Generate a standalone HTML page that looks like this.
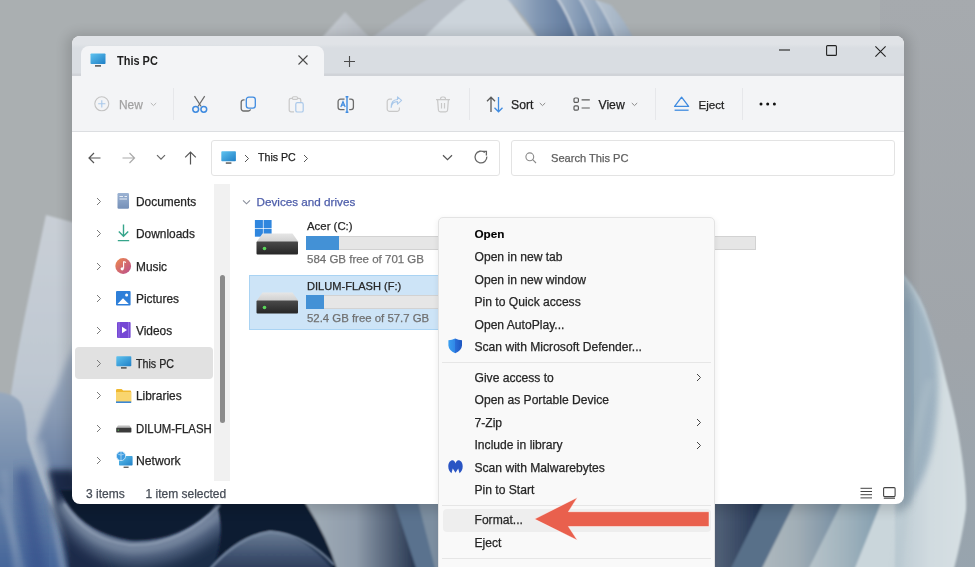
<!DOCTYPE html>
<html><head><meta charset="utf-8">
<style>
*{margin:0;padding:0;box-sizing:border-box}
html,body{width:975px;height:567px;overflow:hidden}
body{position:relative;font-family:"Liberation Sans",sans-serif;background:#a9adb1;color:#262626}
#bg{position:absolute;left:0;top:0}
#win{position:absolute;left:72px;top:36px;width:832px;height:468px;border-radius:8px;overflow:hidden;background:#fff}
.a{position:absolute}
.t{position:absolute;white-space:nowrap;font-size:12px;line-height:12px;-webkit-text-stroke:0.25px currentColor}
svg.i{position:absolute;overflow:visible}
#tabbar{left:0;top:0;width:832px;height:40px;background:linear-gradient(#e0e3e7 0,#e0e3e7 8px,#d9dde2 12px,#d9dde2 37px,#d0d3d8 38px,#d0d3d8 40px)}
#tab{left:9px;top:10px;width:243px;height:32px;background:#f3f4f6;border-radius:8px 8px 0 0}
#toolbar{left:0;top:40px;width:832px;height:56px;background:#f3f4f6;border-bottom:1px solid #dcdee1}
.sep{position:absolute;width:1px;background:#e6e7ea}
.box{position:absolute;border:1px solid #e3e3e3;background:#fff;border-radius:3px}
#menu{position:absolute;left:437.5px;top:217px;width:277.5px;height:360px;background:#f9f9f9;border:1px solid #e3e3e3;border-radius:5px;box-shadow:0 2px 6px rgba(0,0,0,.08)}
.mi{position:absolute;left:36px;white-space:nowrap;font-size:12.1px;line-height:12px;-webkit-text-stroke:0.25px currentColor}
.msep{position:absolute;left:3px;width:269px;height:1px;background:#e6e6e6}
</style></head><body>
<svg id="bg" width="975" height="567" viewBox="0 0 975 567">
  <defs>
    <filter id="b1" x="-10%" y="-10%" width="120%" height="120%"><feGaussianBlur stdDeviation="1.2"/></filter>
    <filter id="b3" x="-30%" y="-30%" width="160%" height="160%"><feGaussianBlur stdDeviation="3"/></filter>
    <filter id="b6" x="-50%" y="-50%" width="200%" height="200%"><feGaussianBlur stdDeviation="6"/></filter>
    <linearGradient id="petalL" x1="0" y1="214" x2="0" y2="567" gradientUnits="userSpaceOnUse">
      <stop offset="0" stop-color="#c9cfd6"/><stop offset="0.45" stop-color="#bfc8d2"/><stop offset="1" stop-color="#9aabc0"/>
    </linearGradient>
    <linearGradient id="lblue" x1="0" y1="392" x2="0" y2="567" gradientUnits="userSpaceOnUse">
      <stop offset="0" stop-color="#98a9be"/><stop offset="0.5" stop-color="#7089ab"/><stop offset="1" stop-color="#46669a"/>
    </linearGradient>
    <linearGradient id="petalR" x1="0" y1="0" x2="1" y2="0">
      <stop offset="0" stop-color="#bccbd3"/><stop offset="0.5" stop-color="#d1dbe0"/><stop offset="1" stop-color="#d6e0e3"/>
    </linearGradient>
    <linearGradient id="greyR" x1="0" y1="0" x2="0" y2="1">
      <stop offset="0" stop-color="#a6aaae"/><stop offset="0.6" stop-color="#a0a5aa"/><stop offset="1" stop-color="#97a4ae"/>
    </linearGradient>
    <linearGradient id="below" x1="0" y1="498" x2="0" y2="567" gradientUnits="userSpaceOnUse">
      <stop offset="0" stop-color="#8593a8"/><stop offset="0.55" stop-color="#6b7c96"/><stop offset="1" stop-color="#3a4c6c"/>
    </linearGradient>
    <linearGradient id="dome" x1="0" y1="0" x2="0" y2="1">
      <stop offset="0" stop-color="#6c7e96"/><stop offset="0.5" stop-color="#3e506e"/><stop offset="1" stop-color="#1e2d4a"/>
    </linearGradient>
    <linearGradient id="lgband" x1="0" y1="0" x2="1" y2="0">
      <stop offset="0" stop-color="#a4b0b9"/><stop offset="0.45" stop-color="#8e9baa"/><stop offset="1" stop-color="#1a2a46"/>
    </linearGradient>
    <linearGradient id="navyL" x1="0" y1="0" x2="1" y2="0">
      <stop offset="0" stop-color="#56657a"/><stop offset="1" stop-color="#1d3050"/>
    </linearGradient>
    <linearGradient id="st2" x1="0" y1="0" x2="1" y2="0">
      <stop offset="0" stop-color="#b0bac0"/><stop offset="0.45" stop-color="#a1aeb6"/><stop offset="1" stop-color="#718aa0"/>
    </linearGradient>
    <linearGradient id="st3" x1="0" y1="0" x2="1" y2="0">
      <stop offset="0" stop-color="#bac6cc"/><stop offset="0.5" stop-color="#a2b4be"/><stop offset="1" stop-color="#819cae"/>
    </linearGradient>
    <linearGradient id="leftdark" x1="0" y1="0" x2="1" y2="0">
      <stop offset="0" stop-color="#0f1a33"/><stop offset="1" stop-color="#16223c"/>
    </linearGradient>
  </defs>
  <rect width="975" height="567" fill="#aaafb1"/>
  <rect x="880" y="-5" width="100" height="580" fill="url(#greyR)"/>
  <!-- top petals -->
  <defs>
    <linearGradient id="tp1" x1="0" y1="0" x2="1" y2="0"><stop offset="0" stop-color="#b3c0ce"/><stop offset="0.45" stop-color="#8197b3"/><stop offset="1" stop-color="#5a7499"/></linearGradient>
    <linearGradient id="tp2" x1="0" y1="0" x2="1" y2="0"><stop offset="0" stop-color="#a5b5c7"/><stop offset="1" stop-color="#6883a6"/></linearGradient>
    <linearGradient id="tp3" x1="0" y1="0" x2="1" y2="0"><stop offset="0" stop-color="#aebccc"/><stop offset="1" stop-color="#7a92af"/></linearGradient>
    <linearGradient id="tp4" x1="0" y1="0" x2="1" y2="0"><stop offset="0" stop-color="#b8c4d0"/><stop offset="1" stop-color="#9aabbf"/></linearGradient>
    <linearGradient id="tri" x1="0" y1="0" x2="1" y2="0"><stop offset="0" stop-color="#c7ccd2"/><stop offset="1" stop-color="#b4bac1"/></linearGradient>
  </defs>
  <g filter="url(#b1)">
    <path d="M318 42L345 12L374 42Z" fill="url(#tri)"/>
    <path d="M366 42Q395 20 432 -4H472L440 42Z" fill="#b5bcc4"/>
    <path d="M420 42Q445 15 470 -4H506Q522 20 540 42Z" fill="#ccd4db"/>
    <path d="M504 -4Q528 18 540 42H578Q568 15 556 -4Z" fill="url(#tp1)"/>
    <path d="M556 -4Q570 15 578 42H599Q589 15 578 -4Z" fill="url(#tp2)"/>
    <path d="M578 -4Q591 15 599 42H618Q607 16 596 0Z" fill="url(#tp3)"/>
    <path d="M596 0Q609 18 618 42H635Q625 20 611 5Z" fill="url(#tp4)"/>
    <path d="M556 -4Q569 15 578 42" stroke="#d3dbe4" stroke-width="1.6" fill="none"/>
    <path d="M578 -4Q590 15 599 42" stroke="#cdd6e0" stroke-width="1.4" fill="none"/>
    <path d="M596 0Q607 16 618 42" stroke="#c9d3dd" stroke-width="1.2" fill="none"/>
  </g>
  <!-- left strip -->
  <defs>
    <linearGradient id="rblue" x1="0" y1="318" x2="0" y2="567" gradientUnits="userSpaceOnUse">
      <stop offset="0" stop-color="#aab7c7"/><stop offset="0.4" stop-color="#8799b3"/><stop offset="0.75" stop-color="#56709a"/><stop offset="1" stop-color="#2f4468"/>
    </linearGradient>
  </defs>
  <g filter="url(#b1)">
    <path d="M46 215L90 227V580H0V470Q5 430 10 400Q16 360 22 330Q32 280 46 215Z" fill="url(#petalL)"/>

    <path d="M95 350Q72 385 58 425Q60 460 72 490" stroke="#9fb0c4" stroke-width="2" fill="none" opacity=".55"/>
  </g>
  <path d="M95 318Q70 345 58 385Q42 418 37 440Q45 468 56 489Q66 512 76 534L88 580H95Z" fill="url(#rblue)" filter="url(#b3)"/>
  <path d="M-5 392Q16 393 22 405Q27 422 27 440Q36 468 44 489Q55 515 64 534Q72 552 76 580H-5Z" fill="url(#lblue)" filter="url(#b1)"/>
  
  
  <path d="M0 495Q12 530 25 580" stroke="#a9b8c9" stroke-width="3" fill="none" opacity=".6" filter="url(#b3)"/>
  <!-- bottom strip left of menu -->
  <g filter="url(#b1)">
    <path d="M73 498Q70 540 70 580H440V498Z" fill="#1f2d4a"/>
  </g>
  <path d="M22 470Q30 520 40 580" stroke="#36508a" stroke-width="14" fill="none" opacity=".8" filter="url(#b6)"/>
  <path d="M40 440Q52 500 66 580" stroke="#a2b1c4" stroke-width="5" fill="none" opacity=".85" filter="url(#b3)"/>
  <path d="M4 470Q10 520 18 580" stroke="#8fa3be" stroke-width="4" fill="none" opacity=".7" filter="url(#b3)"/>
  <!-- navy diagonal band between streak and rim -->
  <path d="M48 470L74 470L88 520L116 580H70Q62 530 48 470Z" fill="#1d2b4a" filter="url(#b3)"/>
  <!-- rim band (wide, soft) -->
  <path d="M62 500Q88 548 130 552Q180 555 226 512" stroke="#4d5e7c" stroke-width="26" fill="none" filter="url(#b6)"/>
  <path d="M64 502Q88 544 130 548Q180 550 224 508" stroke="#75859e" stroke-width="12" fill="none" filter="url(#b3)"/>
  <g filter="url(#b1)">
    <!-- dark hole -->
    <path d="M60 490Q78 532 130 540Q175 543 210 512Q216 505 224 490Z" fill="#0f1a33"/>
    <!-- second dark -->
    <path d="M215 498H400L425 580H340Q315 533 270 531Q232 536 212 570Q228 535 215 498Z" fill="#0f1a31"/>
    <!-- dome -->
    <path d="M198 582Q232 536 270 531Q308 533 342 582Z" fill="url(#dome)"/>
    <!-- light diagonal band -->
    <path d="M302 498H397L423 580H340Q330 540 302 498Z" fill="url(#lgband)"/>
    <path d="M393 498H419L440 580H420Z" fill="#5a728e"/>
    <path d="M417 498H442V580H438Z" fill="#7b8ea0"/>
  </g>
  <path d="M64 504Q86 540 130 545Q180 547 220 505" stroke="#8d9cb2" stroke-width="2" fill="none" filter="url(#b1)"/>
  <path d="M205 575Q236 537 270 532Q306 534 334 565" stroke="#7a8ca4" stroke-width="2" fill="none" filter="url(#b1)"/>
  <!-- bottom strip right of menu -->
  <g filter="url(#b1)">
    <rect x="712" y="498" width="200" height="80" fill="#cad6db"/>
    <path d="M712 498H768L728 578H712Z" fill="url(#navyL)"/>
    <path d="M766 498H799L759 578H726Z" fill="#587089"/>
    <path d="M797 498H846L806 578H757Z" fill="url(#st2)"/>
    <path d="M844 498H883L851 578H804Z" fill="url(#st3)"/>
  </g>
  <!-- right petal -->
  <g filter="url(#b1)">
    <path d="M895 265Q915 285 925 310Q938 345 946 380Q957 420 961 450Q967 490 966 510Q962 540 951 580H895Z" fill="url(#petalR)"/>
  </g>
  <path d="M898 272Q925 298 936 350Q942 400 932 450Q922 490 898 515Z" fill="#95abbb" opacity=".85" filter="url(#b3)"/>
  <path d="M906 300Q913 340 912 420Q910 470 906 505" stroke="#7f9ab0" stroke-width="6" fill="none" opacity=".5" filter="url(#b3)"/>
  <path d="M930 380Q915 430 908 490Q902 530 898 570" stroke="#b4c4cc" stroke-width="6" fill="none" opacity=".5" filter="url(#b3)"/>
  <!-- window shadow -->
  <rect x="66" y="33" width="844" height="478" rx="12" fill="#000" opacity=".13" filter="url(#b6)"/>
</svg>




















<div id="win">
  <div id="tabbar" class="a"></div>
  <div id="tab" class="a"></div>
  <div id="toolbar" class="a"></div>
</div>

<!-- ===== page-coordinate overlay ===== -->
<div id="ui" class="a" style="left:0;top:0;width:975px;height:567px;filter:blur(0.4px)">
<!-- tab icon -->
<svg class="i" style="left:90px;top:53px" width="17" height="15" viewBox="0 0 17 15">
  <defs><linearGradient id="mon" x1="0" y1="0" x2="1" y2="1"><stop offset="0" stop-color="#5fc3ef"/><stop offset="1" stop-color="#1f7fc6"/></linearGradient></defs>
  <rect x="0.5" y="0.5" width="15" height="10.5" rx="0.8" fill="url(#mon)"/>
  <rect x="5" y="12.2" width="6" height="1.4" fill="#444"/>
</svg>
<div class="t" style="left:117px;top:55px;font-size:12.6px;font-weight:bold;color:#1f1f1f;-webkit-text-stroke:0;transform:scaleX(.87);transform-origin:0 0">This PC</div>
<!-- tab close -->
<svg class="i" style="left:298px;top:55px" width="10" height="10" viewBox="0 0 10 10"><path d="M0.5 0.5L9.5 9.5M9.5 0.5L0.5 9.5" stroke="#4a4a4a" stroke-width="1.1"/></svg>
<!-- plus -->
<svg class="i" style="left:344px;top:56px" width="11" height="11" viewBox="0 0 11 11"><path d="M5.5 0V11M0 5.5H11" stroke="#4a4a4a" stroke-width="1.1"/></svg>
<!-- min max close -->
<svg class="i" style="left:779px;top:49px" width="11" height="2" viewBox="0 0 11 2"><path d="M0 1H11" stroke="#222" stroke-width="1.1"/></svg>
<svg class="i" style="left:826px;top:45px" width="11" height="11" viewBox="0 0 11 11"><rect x="0.6" y="0.6" width="9.8" height="9.8" rx="1" fill="none" stroke="#222" stroke-width="1.1"/></svg>
<svg class="i" style="left:874.8px;top:45.5px" width="11" height="11" viewBox="0 0 11 11"><path d="M0.4 0.4L10.6 10.6M10.6 0.4L0.4 10.6" stroke="#222" stroke-width="1.1"/></svg>

<!-- toolbar -->
<svg class="i" style="left:94px;top:96px" width="16" height="16" viewBox="0 0 16 16"><circle cx="7.8" cy="7.8" r="7" fill="none" stroke="#c4c4c4" stroke-width="1.1"/><path d="M7.8 4.2V11.4M4.2 7.8H11.4" stroke="#a9c8ea" stroke-width="1.1"/></svg>
<div class="t" style="left:119px;top:99px;color:#a2a2a2;font-size:11.9px">New</div>
<svg class="i" style="left:150px;top:102px" width="7" height="5" viewBox="0 0 7 5"><path d="M0.8 1L3.5 3.6L6.2 1" fill="none" stroke="#b5b5b5" stroke-width="1"/></svg>
<div class="sep" style="left:173px;top:88px;height:32px"></div>
<!-- cut -->
<svg class="i" style="left:191px;top:95px" width="17" height="18" viewBox="0 0 17 18">
  <path d="M3.5 1.2L10.2 11.5M13.7 1.2L7 11.5" stroke="#6b6b6b" stroke-width="1.2"/>
  <circle cx="4.7" cy="14.3" r="2.9" fill="none" stroke="#3f8be0" stroke-width="1.5"/>
  <circle cx="12.8" cy="14.3" r="2.9" fill="none" stroke="#3f8be0" stroke-width="1.5"/>
</svg>
<!-- copy -->
<svg class="i" style="left:240px;top:96px" width="17" height="17" viewBox="0 0 17 17">
  <path d="M4.6 3.8H3.6A2.4 2.4 0 0 0 1.2 6.2V12.6A2.4 2.4 0 0 0 3.6 15H8.4A2.4 2.4 0 0 0 10.6 13.4" fill="none" stroke="#6b6b6b" stroke-width="1.3"/>
  <rect x="6.3" y="1.2" width="9" height="11" rx="2.4" fill="none" stroke="#3f8be0" stroke-width="1.3"/>
</svg>
<!-- paste disabled -->
<svg class="i" style="left:288px;top:96px" width="17" height="17" viewBox="0 0 17 17">
  <path d="M4.5 2.3H3A1.8 1.8 0 0 0 1.2 4.1V14A1.8 1.8 0 0 0 3 15.8H6" fill="none" stroke="#c8c8c8" stroke-width="1.2"/>
  <rect x="4.5" y="0.8" width="5" height="2.6" rx="1" fill="none" stroke="#c8c8c8" stroke-width="1.1"/>
  <path d="M10 2.3H11A1.8 1.8 0 0 1 12.8 4.1V6" fill="none" stroke="#c8c8c8" stroke-width="1.2"/>
  <rect x="7.8" y="6.6" width="7.4" height="9.4" rx="1.6" fill="none" stroke="#a9c8ea" stroke-width="1.2"/>
</svg>
<!-- rename -->
<svg class="i" style="left:337px;top:96px" width="18" height="17" viewBox="0 0 18 17">
  <path d="M7.5 3.2H3.5A2.4 2.4 0 0 0 1.1 5.6V11.2A2.4 2.4 0 0 0 3.5 13.6H7.5M12.2 3.2H14A2.4 2.4 0 0 1 16.4 5.6V11.2A2.4 2.4 0 0 1 14 13.6H12.2" fill="none" stroke="#6b6b6b" stroke-width="1.3"/>
  <path d="M3.8 11L6 5.6L8.2 11M4.6 9.2H7.4" fill="none" stroke="#3f8be0" stroke-width="1.2"/>
  <path d="M10 0.8V16.2M8.6 0.8H11.4M8.6 16.2H11.4" fill="none" stroke="#3f8be0" stroke-width="1.4"/>
</svg>
<!-- share disabled -->
<svg class="i" style="left:386px;top:96px" width="17" height="17" viewBox="0 0 17 17">
  <path d="M6 3.2H3.6A2.4 2.4 0 0 0 1.2 5.6V13A2.4 2.4 0 0 0 3.6 15.4H11A2.4 2.4 0 0 0 13.4 13V11.5" fill="none" stroke="#c8c8c8" stroke-width="1.2"/>
  <path d="M5.2 11.5C5.6 7.5 8 5.6 11.5 5.6V8.2L15.6 4.4L11.5 0.9V3.5C7.5 3.7 5 6.5 5.2 11.5Z" fill="none" stroke="#a9c8ea" stroke-width="1.1" stroke-linejoin="round"/>
</svg>
<!-- delete disabled -->
<svg class="i" style="left:435px;top:96px" width="16" height="17" viewBox="0 0 16 17">
  <path d="M1 3.6H15M5.6 3.6V2.6A1.6 1.6 0 0 1 7.2 1H8.8A1.6 1.6 0 0 1 10.4 2.6V3.6M2.6 3.6L3.4 14A2 2 0 0 0 5.4 15.8H10.6A2 2 0 0 0 12.6 14L13.4 3.6M6.5 7V12.5M9.5 7V12.5" fill="none" stroke="#c8c8c8" stroke-width="1.2"/>
</svg>
<div class="sep" style="left:469px;top:88px;height:32px"></div>
<!-- sort -->
<svg class="i" style="left:486px;top:96px" width="18" height="17" viewBox="0 0 18 17">
  <path d="M5 16V1.2M1 5.2L5 1.2L9 5.2" fill="none" stroke="#5a5a5a" stroke-width="1.3"/>
  <path d="M12.5 1V15.8M8.5 11.8L12.5 15.8L16.5 11.8" fill="none" stroke="#3f8be0" stroke-width="1.3"/>
</svg>
<div class="t" style="left:511px;top:99px;font-size:12.2px;color:#1f1f1f">Sort</div>
<svg class="i" style="left:539px;top:102px" width="7" height="5" viewBox="0 0 7 5"><path d="M0.8 1L3.5 3.6L6.2 1" fill="none" stroke="#8a8a8a" stroke-width="1"/></svg>
<!-- view -->
<svg class="i" style="left:573px;top:97px" width="18" height="15" viewBox="0 0 18 15">
  <rect x="1" y="1" width="4.4" height="4.4" rx="1.2" fill="none" stroke="#5a5a5a" stroke-width="1.2"/>
  <rect x="1" y="8.8" width="4.4" height="4.4" rx="1.2" fill="none" stroke="#5a5a5a" stroke-width="1.2"/>
  <path d="M8.6 2.8H16.8M8.6 11H16.8" stroke="#5a5a5a" stroke-width="1.2"/>
</svg>
<div class="t" style="left:598.5px;top:99px;font-size:12.2px;color:#1f1f1f">View</div>
<svg class="i" style="left:631px;top:102px" width="7" height="5" viewBox="0 0 7 5"><path d="M0.8 1L3.5 3.6L6.2 1" fill="none" stroke="#8a8a8a" stroke-width="1"/></svg>
<div class="sep" style="left:655px;top:88px;height:32px"></div>
<!-- eject -->
<svg class="i" style="left:673px;top:96px" width="18" height="17" viewBox="0 0 18 17">
  <path d="M8.6 1.2L15.6 10.4H1.6Z" fill="none" stroke="#3f8be0" stroke-width="1.3" stroke-linejoin="round"/>
  <path d="M1.6 14.2H15.6" stroke="#3f8be0" stroke-width="1.3"/>
</svg>
<div class="t" style="left:698.5px;top:99px;font-size:11.6px;color:#1f1f1f">Eject</div>
<div class="sep" style="left:742px;top:88px;height:32px"></div>
<svg class="i" style="left:759px;top:102px" width="18" height="4" viewBox="0 0 18 4"><circle cx="2" cy="2" r="1.5" fill="#111"/><circle cx="8.7" cy="2" r="1.5" fill="#111"/><circle cx="15.4" cy="2" r="1.5" fill="#111"/></svg>
<!-- nav arrows -->
<svg class="i" style="left:88px;top:152px" width="13" height="12" viewBox="0 0 13 12"><path d="M12.5 6H1M6 1L1 6L6 11" fill="none" stroke="#555" stroke-width="1.2"/></svg>
<svg class="i" style="left:122px;top:152px" width="14" height="12" viewBox="0 0 14 12"><path d="M0.5 6H12.5M7.5 1L12.5 6L7.5 11" fill="none" stroke="#aaa" stroke-width="1.2"/></svg>
<svg class="i" style="left:156px;top:154px" width="10" height="7" viewBox="0 0 10 7"><path d="M1 1.2L5 5.2L9 1.2" fill="none" stroke="#666" stroke-width="1.2"/></svg>
<svg class="i" style="left:184px;top:151px" width="13" height="14" viewBox="0 0 13 14"><path d="M6.5 13.5V1M1.2 6.3L6.5 1L11.8 6.3" fill="none" stroke="#555" stroke-width="1.2"/></svg>
<!-- address box -->
<div class="box" style="left:211px;top:140px;width:289px;height:36px"></div>
<svg class="i" style="left:221px;top:151px" width="16" height="14" viewBox="0 0 16 14">
  <rect x="0.3" y="0.3" width="14.6" height="10" rx="0.8" fill="url(#mon)"/>
  <rect x="4.8" y="11.4" width="5.6" height="1.3" fill="#444"/>
</svg>
<svg class="i" style="left:244px;top:154px" width="6" height="9" viewBox="0 0 6 9"><path d="M1 1L4.5 4.5L1 8" fill="none" stroke="#555" stroke-width="1"/></svg>
<div class="t" style="left:258px;top:151px;font-size:11.8px;color:#1b1b1b;transform:scaleX(.9);transform-origin:0 0">This PC</div>
<svg class="i" style="left:303px;top:154px" width="6" height="9" viewBox="0 0 6 9"><path d="M1 1L4.5 4.5L1 8" fill="none" stroke="#555" stroke-width="1"/></svg>
<svg class="i" style="left:442px;top:154px" width="11" height="7" viewBox="0 0 11 7"><path d="M1 1.2L5.5 5.6L10 1.2" fill="none" stroke="#555" stroke-width="1.2"/></svg>
<svg class="i" style="left:474px;top:150px" width="15" height="15" viewBox="0 0 15 15"><path d="M12.8 6.6A5.9 5.9 0 1 1 10.8 2.6" fill="none" stroke="#666" stroke-width="1.3"/><path d="M8.4 1.4H12.4V5.4" fill="none" stroke="#666" stroke-width="1.3"/></svg>
<!-- search box -->
<div class="box" style="left:511px;top:140px;width:384px;height:36px"></div>
<svg class="i" style="left:525px;top:152px" width="12" height="12" viewBox="0 0 12 12"><circle cx="4.8" cy="4.8" r="3.9" fill="none" stroke="#8a8a8a" stroke-width="1.1"/><path d="M7.7 7.7L11 11" stroke="#8a8a8a" stroke-width="1.1"/></svg>
<div class="t" style="left:551px;top:151.5px;font-size:11.1px;color:#5f5f5f">Search This PC</div>

<!-- nav pane -->
<div class="a" style="left:75px;top:347px;width:138px;height:32px;background:#e1e1e1;border-radius:4px"></div>
<div class="a" style="left:214px;top:184px;width:16px;height:297px;background:#f1f1f1"></div>
<div class="a" style="left:220px;top:275px;width:5px;height:148px;background:#8b8b8b;border-radius:3px"></div>
<svg class="i" style="left:96px;top:196.5px" width="6" height="9" viewBox="0 0 6 9"><path d="M1 1L4.5 4.5L1 8" fill="none" stroke="#7a7a7a" stroke-width="1"/></svg>
<div class="t" style="left:136px;top:195.5px;font-size:11.9px">Documents</div>
<svg class="i" style="left:96px;top:229.0px" width="6" height="9" viewBox="0 0 6 9"><path d="M1 1L4.5 4.5L1 8" fill="none" stroke="#7a7a7a" stroke-width="1"/></svg>
<div class="t" style="left:136px;top:228.0px;font-size:11.9px">Downloads</div>
<svg class="i" style="left:96px;top:261.5px" width="6" height="9" viewBox="0 0 6 9"><path d="M1 1L4.5 4.5L1 8" fill="none" stroke="#7a7a7a" stroke-width="1"/></svg>
<div class="t" style="left:136px;top:260.5px;font-size:11.9px">Music</div>
<svg class="i" style="left:96px;top:293.9px" width="6" height="9" viewBox="0 0 6 9"><path d="M1 1L4.5 4.5L1 8" fill="none" stroke="#7a7a7a" stroke-width="1"/></svg>
<div class="t" style="left:136px;top:292.9px;font-size:11.9px">Pictures</div>
<svg class="i" style="left:96px;top:326.1px" width="6" height="9" viewBox="0 0 6 9"><path d="M1 1L4.5 4.5L1 8" fill="none" stroke="#7a7a7a" stroke-width="1"/></svg>
<div class="t" style="left:136px;top:325.1px;font-size:11.9px">Videos</div>
<svg class="i" style="left:96px;top:358.5px" width="6" height="9" viewBox="0 0 6 9"><path d="M1 1L4.5 4.5L1 8" fill="none" stroke="#7a7a7a" stroke-width="1"/></svg>
<div class="t" style="left:136px;top:357.5px;font-size:11.9px;transform:scaleX(.9);transform-origin:0 0">This PC</div>
<svg class="i" style="left:96px;top:391.0px" width="6" height="9" viewBox="0 0 6 9"><path d="M1 1L4.5 4.5L1 8" fill="none" stroke="#7a7a7a" stroke-width="1"/></svg>
<div class="t" style="left:136px;top:390.0px;font-size:11.9px">Libraries</div>
<svg class="i" style="left:96px;top:423.5px" width="6" height="9" viewBox="0 0 6 9"><path d="M1 1L4.5 4.5L1 8" fill="none" stroke="#7a7a7a" stroke-width="1"/></svg>
<div class="t" style="left:136px;top:422.5px;font-size:11.9px;transform:scaleX(.955);transform-origin:0 0">DILUM-FLASH</div>
<svg class="i" style="left:96px;top:456.0px" width="6" height="9" viewBox="0 0 6 9"><path d="M1 1L4.5 4.5L1 8" fill="none" stroke="#7a7a7a" stroke-width="1"/></svg>
<div class="t" style="left:136px;top:455.0px;font-size:12.2px">Network</div><!-- nav icons -->
<svg class="i" style="left:117px;top:193px" width="13" height="16" viewBox="0 0 13 16">
  <defs><linearGradient id="doc" x1="0" y1="0" x2="0" y2="1"><stop offset="0" stop-color="#9cb3d3"/><stop offset="1" stop-color="#7590b8"/></linearGradient></defs>
  <rect x="0.5" y="0" width="11.5" height="15.8" rx="1.2" fill="url(#doc)"/>
  <path d="M2.5 3.5H6M7.5 3.5H10M2.5 6H10" stroke="#e8eef6" stroke-width="1"/>
</svg>
<svg class="i" style="left:117px;top:224px" width="13" height="18" viewBox="0 0 13 18">
  <path d="M6.5 0.5V12M1.8 7.6L6.5 12.3L11.2 7.6M0.8 16.6H12.2" fill="none" stroke="#36a58b" stroke-width="1.4"/>
</svg>
<svg class="i" style="left:115px;top:258px" width="17" height="17" viewBox="0 0 17 17">
  <defs><linearGradient id="mus" x1="0" y1="0" x2="1" y2="1"><stop offset="0" stop-color="#ee8a4c"/><stop offset="1" stop-color="#b94c8e"/></linearGradient></defs>
  <circle cx="8.2" cy="8" r="7.9" fill="url(#mus)"/>
  <path d="M8.6 3.6V10.6" stroke="#fff" stroke-width="1.1"/><circle cx="7.2" cy="10.8" r="1.6" fill="#fff"/><path d="M8.6 3.6L11 4.6" stroke="#fff" stroke-width="1.1"/>
</svg>
<svg class="i" style="left:116px;top:291px" width="15" height="15" viewBox="0 0 15 15">
  <rect x="0" y="0" width="14.6" height="14.6" rx="1" fill="#2e7fd9"/>
  <path d="M1.5 13L7 7.2L12.8 13Z" fill="#fff"/><circle cx="10.6" cy="4" r="1.5" fill="#fff"/>
</svg>
<svg class="i" style="left:116.5px;top:322px" width="14" height="17" viewBox="0 0 14 17">
  <rect x="0" y="0" width="13.6" height="16" rx="1" fill="#7547d4"/>
  <path d="M2 0V16M11.6 0V16" stroke="#9a78e6" stroke-width="0.8"/>
  <path d="M5 4.8L10 8L5 11.2Z" fill="#fff"/>
</svg>
<svg class="i" style="left:116px;top:356px" width="16" height="14" viewBox="0 0 16 14">
  <rect x="0.3" y="0.3" width="15" height="10" rx="0.8" fill="url(#mon)"/>
  <rect x="5" y="11.2" width="5.6" height="1.4" fill="#444"/>
</svg>
<svg class="i" style="left:115.5px;top:389px" width="16" height="15" viewBox="0 0 16 15">
  <path d="M0 1.2A1.2 1.2 0 0 1 1.2 0H5.6L7.2 1.6H14A1.2 1.2 0 0 1 15.2 2.8V13.2H0Z" fill="#f0b930"/>
  <rect x="0" y="3" width="15.2" height="10.2" rx="0.6" fill="#f9d56e"/>
  <rect x="0" y="12.4" width="15.2" height="1.6" fill="#3a86d4"/>
</svg>
<svg class="i" style="left:115.5px;top:425px" width="16" height="8" viewBox="0 0 16 8">
  <path d="M2 0.5H13.5L15.4 3H0.2Z" fill="#bdbdbd"/>
  <rect x="0.2" y="2.8" width="15.2" height="4.6" rx="0.6" fill="#3b3b3b"/>
  <circle cx="2.3" cy="5.1" r="0.7" fill="#5dd35d"/>
</svg>
<svg class="i" style="left:115.5px;top:451px" width="17" height="19" viewBox="0 0 17 19">
  <rect x="3" y="5" width="13.6" height="9.6" rx="0.8" fill="url(#mon)"/>
  <rect x="7.6" y="15.6" width="5" height="1.3" fill="#555"/>
  <circle cx="5" cy="5" r="4.6" fill="#3d9be0" stroke="#d9ecf9" stroke-width="0.8"/>
  <path d="M2.2 3.2Q5 5 7.8 3.2M5 0.6V9.4" stroke="#bfe2f8" stroke-width="0.7" fill="none"/>
</svg>

<!-- content -->
<svg class="i" style="left:242px;top:199px" width="9" height="7" viewBox="0 0 9 7"><path d="M1 1.3L4.5 4.8L8 1.3" fill="none" stroke="#8a8f9c" stroke-width="1.1"/></svg>
<div class="t" style="left:256.5px;top:195.5px;font-size:11.7px;color:#4d5daa">Devices and drives</div>
<!-- Acer drive icon -->
<svg class="i" style="left:254px;top:219px" width="46" height="37" viewBox="0 0 46 37">
  <defs>
    <linearGradient id="dtop" x1="0" y1="0" x2="0" y2="1"><stop offset="0" stop-color="#e6e6e6"/><stop offset="1" stop-color="#cfcfcf"/></linearGradient>
    <linearGradient id="dbody" x1="0" y1="0" x2="0" y2="1"><stop offset="0" stop-color="#4a4a4a"/><stop offset="1" stop-color="#262626"/></linearGradient>
  </defs>
  <rect x="0.9" y="1" width="8" height="8" fill="#2f86de"/><rect x="9.6" y="1" width="8" height="8" fill="#2f86de"/>
  <rect x="0.9" y="9.7" width="8" height="8" fill="#2f86de"/><rect x="9.6" y="9.7" width="8" height="8" fill="#2f86de"/>
  <path d="M2.5 23L8.5 14.5H38.5L44.5 23Z" fill="url(#dtop)"/>
  <rect x="2.5" y="22.5" width="41.5" height="13" rx="1" fill="url(#dbody)"/>
  <circle cx="10.5" cy="29.5" r="1.8" fill="#5ad85a"/>
</svg>
<div class="t" style="left:307px;top:220px;font-size:11.4px">Acer (C:)</div>
<div class="a" style="left:306px;top:236px;width:450px;height:14px;background:#e6e6e6;border:1px solid #d2d2d2"></div>
<div class="a" style="left:306px;top:236px;width:33px;height:14px;background:#4391d6"></div>
<div class="t" style="left:307px;top:253px;font-size:11.5px;color:#707070">584 GB free of 701 GB</div>
<!-- selected flash -->
<div class="a" style="left:249px;top:275px;width:200px;height:55px;background:#cde4f7;border:1px solid #a9d3f3"></div>
<svg class="i" style="left:254px;top:289px" width="46" height="26" viewBox="0 0 46 26">
  <path d="M2.5 12L8.5 3.5H38.5L44.5 12Z" fill="url(#dtop)"/>
  <rect x="2.5" y="11.5" width="41.5" height="13" rx="1" fill="url(#dbody)"/>
  <circle cx="10.5" cy="18.5" r="1.8" fill="#5ad85a"/>
</svg>
<div class="t" style="left:307px;top:279.5px;font-size:11.1px">DILUM-FLASH (F:)</div>
<div class="a" style="left:306px;top:295px;width:140px;height:14px;background:#e6e6e6;border:1px solid #d2d2d2"></div>
<div class="a" style="left:306px;top:295px;width:18px;height:14px;background:#4391d6"></div>
<div class="t" style="left:307px;top:311.5px;font-size:11.4px;color:#707070">52.4 GB free of 57.7 GB</div>

<!-- status bar -->
<div class="t" style="left:86px;top:488px;font-size:12px;color:#464c56">3 items</div>
<div class="t" style="left:145.5px;top:488px;font-size:12px;color:#464c56">1 item selected</div>
<svg class="i" style="left:860px;top:487px" width="13" height="12" viewBox="0 0 13 12"><path d="M0.5 1.3H12M0.5 4.5H12M0.5 7.7H12M0.5 10.9H12" stroke="#444" stroke-width="1"/></svg>
<svg class="i" style="left:883px;top:487px" width="13" height="12" viewBox="0 0 13 12"><rect x="0.6" y="0.6" width="11.5" height="9" rx="1" fill="none" stroke="#444" stroke-width="1.1"/><path d="M0.8 11.2H12" stroke="#444" stroke-width="1.1"/></svg>
<!-- context menu -->
<div id="menu">
  <div class="mi" style="top:9.5px;font-weight:bold;font-size:11.7px;color:#000;-webkit-text-stroke:0.15px #000">Open</div>
  <div class="mi" style="top:33px">Open in new tab</div>
  <div class="mi" style="top:55.5px">Open in new window</div>
  <div class="mi" style="top:78px">Pin to Quick access</div>
  <div class="mi" style="top:100.5px">Open AutoPlay...</div>
  <div class="mi" style="top:123px">Scan with Microsoft Defender...</div>
  <div class="msep" style="top:144px"></div>
  <div class="mi" style="top:153.5px">Give access to</div>
  <div class="mi" style="top:176px">Open as Portable Device</div>
  <div class="mi" style="top:198.5px">7-Zip</div>
  <div class="mi" style="top:221px">Include in library</div>
  <div class="mi" style="top:243.5px">Scan with Malwarebytes</div>
  <div class="mi" style="top:266px">Pin to Start</div>
  <div class="msep" style="top:287px"></div>
  <div class="a" style="left:4px;top:291px;width:268px;height:23px;background:#eeeeee;border-radius:4px"></div>
  <div class="mi" style="top:296px">Format...</div>
  <div class="mi" style="top:318.5px">Eject</div>
  <div class="msep" style="top:340px"></div>
</div>
<svg class="i" style="left:696px;top:373px" width="6" height="9" viewBox="0 0 6 9"><path d="M1 1L4.5 4.5L1 8" fill="none" stroke="#444" stroke-width="1"/></svg>
<svg class="i" style="left:696px;top:418px" width="6" height="9" viewBox="0 0 6 9"><path d="M1 1L4.5 4.5L1 8" fill="none" stroke="#444" stroke-width="1"/></svg>
<svg class="i" style="left:696px;top:441px" width="6" height="9" viewBox="0 0 6 9"><path d="M1 1L4.5 4.5L1 8" fill="none" stroke="#444" stroke-width="1"/></svg>
<!-- defender -->
<svg class="i" style="left:448px;top:338.3px" width="15" height="16" viewBox="0 0 15 16">
  <defs><linearGradient id="def" x1="0" y1="0" x2="1" y2="0"><stop offset="0" stop-color="#3b9ff0"/><stop offset="0.5" stop-color="#2f86e6"/><stop offset="0.5" stop-color="#2a6fd8"/><stop offset="1" stop-color="#1d55c0"/></linearGradient></defs>
  <path d="M7.2 0.6Q4 2.2 0.4 2.3V7.6Q0.8 12.6 7.2 15.2Q13.6 12.6 14 7.6V2.3Q10.4 2.2 7.2 0.6Z" fill="url(#def)"/>
</svg>
<!-- malwarebytes -->
<svg class="i" style="left:448px;top:460.3px" width="15" height="14" viewBox="0 0 15 14">
  <path d="M0.3 6.5C0.3 2.5 2.5 0.3 4.5 0.3C6 0.3 7 1.8 7.5 3.5C8 1.8 9 0.3 10.5 0.3C12.5 0.3 14.7 2.5 14.7 6.5C14.7 9.5 13.3 12 11.5 13.2C11 11 10.5 9.5 10.2 8.5L7.5 12.8L4.8 8.5C4.5 9.5 4 11 3.5 13.2C1.7 12 0.3 9.5 0.3 6.5Z" fill="#2a55c4"/>
</svg>
<!-- red arrow -->
<svg class="i" style="left:0;top:0" width="975" height="567" viewBox="0 0 975 567">
  <path d="M534.5 519.1L577.4 497.4L568.4 511.7H709V526.5H568.4L577.4 540.3Z" fill="#e9604d" stroke="rgba(255,255,255,.6)" stroke-width="0.8" stroke-linejoin="miter"/>
</svg>

</div>
</body></html>
